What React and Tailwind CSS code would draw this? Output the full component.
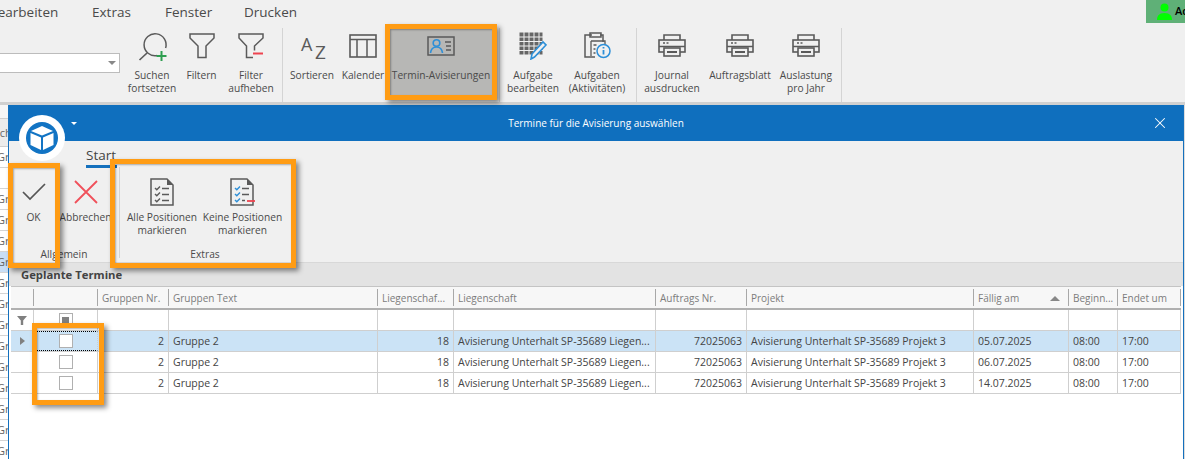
import React from "react";
import { X } from "lucide-react";

const rowsBehind = [
  "Gruppe 2", "", "Gruppe 2", "Gruppe 2", "Gruppe 2", "Gruppe 2", "Gruppe 2", "Gruppe 2", "Gruppe 2",
  "Gruppe 2", "Gruppe 2", "Gruppe 2", "Gruppe 2", "Gruppe 2", "Gruppe 2",
];

const columns = [
  { label: "", w: "w-[23px]" },
  { label: "", w: "w-[64px]" },
  { label: "Gruppen Nr.", w: "w-[71px]", right: true, key: "nr" },
  { label: "Gruppen Text", w: "w-[209px]", key: "text" },
  { label: "Liegenschaf...", w: "w-[76px]", right: true, key: "lnr" },
  { label: "Liegenschaft", w: "w-[202px]", key: "lieg" },
  { label: "Auftrags Nr.", w: "w-[91px]", right: true, key: "auftrag" },
  { label: "Projekt", w: "w-[227px]", key: "projekt" },
  { label: "Fällig am", w: "w-[95px]", key: "datum", sort: true },
  { label: "Beginn...", w: "w-[49px]", key: "start" },
  { label: "Endet um", w: "w-[63px]", key: "ende" },
];

const termine = ["05.07.2025", "06.07.2025", "14.07.2025"].map((datum) => ({
  nr: "2",
  text: "Gruppe 2",
  lnr: "18",
  lieg: "Avisierung Unterhalt SP-35689 Liegen...",
  auftrag: "72025063",
  projekt: "Avisierung Unterhalt SP-35689 Projekt 3",
  datum,
  start: "08:00",
  ende: "17:00",
}));

function SearchPlus() {
  return (
    <svg width="32" height="32" viewBox="0 0 32 32" fill="none">
      <path d="M21 25.6A11 11 0 1 1 29.6 18" stroke="#5a5a5a" strokeWidth="1.5" />
      <path d="M3.5 30 11 23" stroke="#5a5a5a" strokeWidth="1.7" />
      <path d="M25.5 21v10M20.5 26h10" stroke="#2e9e50" strokeWidth="2" />
    </svg>
  );
}

function Funnel({ minus }) {
  return (
    <svg width="26" height="26" viewBox="0 0 26 26" fill="none">
      {minus ? (
        <>
          <path d="M16.500 17.500V13L25 5V1H1V5L8.500 13V24.500H15" stroke="#5a5a5a" strokeWidth="1.5" />
          <path d="M15 20.500H25" stroke="#ee4450" strokeWidth="2" />
        </>
      ) : (
        <path d="M1 1H25V5L17 13V24.500H9V13L1 5Z" stroke="#5a5a5a" strokeWidth="1.5" />
      )}
    </svg>
  );
}

function SortAz() {
  return (
    <svg width="28" height="26" viewBox="0 0 28 26">
      <text x="3" y="17.500" fontSize="18" fontFamily="Open Sans" fill="#5a5a5a">A</text>
      <text x="17" y="25.500" fontSize="19" fontFamily="Open Sans" fill="#5a5a5a">Z</text>
    </svg>
  );
}

function CalendarGrid() {
  return (
    <svg width="28" height="24" viewBox="0 0 28 24" fill="none" stroke="#5a5a5a">
      <rect x="1" y="1" width="26" height="22" strokeWidth="1.6" />
      <path d="M1 5.500H27" strokeWidth="1.5" />
      <path d="M8 5.500V23M18 5.500V23" strokeWidth="1.5" />
    </svg>
  );
}

function ContactCard() {
  return (
    <svg width="28" height="20" viewBox="0 0 28 20" fill="none">
      <rect x="1" y="1" width="26" height="18" stroke="#5a5a5a" strokeWidth="1.5" />
      <circle cx="9.500" cy="7" r="3.300" stroke="#2d8fd8" strokeWidth="1.6" />
      <path d="M3.500 17c.5-4 2.500-6 6-6s5.500 2 6 6" stroke="#2d8fd8" strokeWidth="1.6" />
      <path d="M18 6h6M19 10h5M19 14h5" stroke="#5a5a5a" strokeWidth="1.5" />
    </svg>
  );
}

function GridPencil() {
  return (
    <svg width="28" height="28" viewBox="0 0 28 28" fill="none">
      <rect x="0.500" y="0.500" width="23" height="22" fill="#666" />
      <path d="M0 5h24M0 9.500h24M0 14h24M0 18.500h24M5 0v23M10 0v23M15 0v23M20 0v23" stroke="#f0f0f0" strokeWidth="1" />
      <path d="M13 22 24 10l3 3-11.500 12L12 27Z" fill="#f0f0f0" stroke="#2d8fd8" strokeWidth="1.600" />
    </svg>
  );
}

function ClipboardInfo() {
  return (
    <svg width="28" height="27" viewBox="0 0 28 27" fill="none">
      <path d="M9 3H2v22h10" stroke="#5a5a5a" strokeWidth="1.500" />
      <path d="M17 3h3v7" stroke="#5a5a5a" strokeWidth="1.500" />
      <rect x="7" y="1" width="11" height="4" stroke="#5a5a5a" strokeWidth="1.500" />
      <path d="M8 9h14v4M8 9v15" stroke="#5a5a5a" strokeWidth="1.300" />
      <path d="M10.500 13h3M10.500 17h2M10.500 21h2" stroke="#5a5a5a" strokeWidth="1.300" />
      <circle cx="20.500" cy="19" r="6.500" fill="#f0f0f0" stroke="#2d8fd8" strokeWidth="1.500" />
      <path d="M20.500 18v4.500M20.500 15v1.500" stroke="#2d8fd8" strokeWidth="1.800" />
    </svg>
  );
}

function Printer() {
  return (
    <svg width="28" height="23" viewBox="0 0 28 23" fill="none" stroke="#5a5a5a">
      <path d="M6 6V1h16v5" strokeWidth="1.600" />
      <rect x="1" y="6" width="26" height="12" strokeWidth="1.600" />
      <path d="M1 12.500h26" strokeWidth="1.500" />
      <rect x="6" y="14" width="16" height="8" fill="#f0f0f0" strokeWidth="1.600" />
      <path d="M9 18h10" strokeWidth="2" />
      <path d="M5 9h2M8.500 9h2" strokeWidth="1.300" />
    </svg>
  );
}

function CheckList({ color, minus }) {
  return (
    <svg width="25" height="28" viewBox="0 0 25 28" fill="none">
      <path d="M1 1H17L23 7V27H1Z" stroke="#5a5a5a" strokeWidth="1.500" />
      <path d="M17 1V7H23Z" fill="#5a5a5a" />
      <path d="M5 10l1.800 1.800L10 8.500M5 16l1.800 1.800L10 14.500M5 22l1.800 1.800L10 20.500" stroke={color} strokeWidth="1.400" />
      <path d="M12 10.500h7M12 16.500h7" stroke="#5a5a5a" strokeWidth="1.500" />
      <path d={minus ? "M12 22.500h3" : "M12 22.500h7"} stroke="#5a5a5a" strokeWidth="1.500" />
      {minus && <path d="M17 23h8" stroke="#ee4450" strokeWidth="1.800" />}
    </svg>
  );
}

function Cube() {
  return (
    <svg width="24" height="26" viewBox="0 0 24 26" fill="#fff">
      <path d="M12 1 23 6 12 10.500 1 6Z" />
      <path d="M.5 8 11 12.500V25L.5 20Z" />
      <path d="M23.500 8 13 12.500V25l10.500-5Z" />
    </svg>
  );
}

function RibbonButton({ w, icon, lines, height = "h-[35px]", gap = "mt-[6px]" }) {
  return (
    <div className={`${w} flex shrink-0 flex-col items-center`}>
      <div className={`${height} flex items-center justify-center`}>{icon}</div>
      <div className={`${gap} text-center text-[10.200px] leading-[13px] text-[#4a4a4a] whitespace-nowrap`}>
        {lines.map((l) => (
          <div key={l}>{l}</div>
        ))}
      </div>
    </div>
  );
}

function Sep({ className = "" }) {
  return <div className={`w-px self-stretch bg-[#d4d4d4] ${className}`} />;
}

function Highlight({ className }) {
  return (
    <div
      className={`pointer-events-none absolute border-[5px] border-[#ff9c14] shadow-[3px_3px_5px_rgba(0,0,0,0.45),inset_1px_1px_2px_rgba(0,0,0,0.3)] ${className}`}
    />
  );
}

function CheckBox({ mixed }) {
  return (
    <div className="flex h-[14px] w-[14px] items-center justify-center border border-[#b0b0b0] bg-white">
      {mixed && <div className="h-[7px] w-[7px] bg-[#808080]" />}
    </div>
  );
}

export default function App() {
  return (
    <div className="relative h-[459px] w-[1185px] overflow-hidden bg-[#f0f0f0] font-['Open_Sans',sans-serif] text-[#4a4a4a]">
      {/* Hauptfenster */}
      <div className="h-[105px] border-b-[3px] border-[#d0d0d0]">
        <div className="flex h-[28px]">
          <div className="flex pl-[1px] text-[13.500px] leading-[25px] text-[#4a4a4a]">
            <span className="-ml-[12px] w-[103px]">Bearbeiten</span>
            <span className="w-[73px]">Extras</span>
            <span className="w-[79px]">Fenster</span>
            <span>Drucken</span>
          </div>
          <div className="ml-auto flex h-[23px] w-[39px] items-center gap-[3px] overflow-hidden bg-[#5fb077] pl-[11px]">
            <svg width="15" height="17" viewBox="0 0 15 17" fill="#00ff00" className="shrink-0">
              <circle cx="7.500" cy="4.500" r="4" />
              <path d="M0 17c0-4 2-7 7.500-7S15 13 15 17Z" />
            </svg>
            <span className="text-[11px] font-semibold text-black">Admin</span>
          </div>
        </div>
        <div className="flex h-[74px]">
          <div className="w-[127px] pt-[25px]">
            <div className="relative h-[20px] w-[120px] border border-[#bcbcbc] border-l-0 bg-white">
              <div className="absolute right-[3px] top-[7px] h-0 w-0 border-x-[4px] border-t-[4px] border-x-transparent border-t-[#888]" />
            </div>
          </div>
          <RibbonButton w="w-[50px]" icon={<SearchPlus />} lines={["Suchen", "fortsetzen"]} />
          <RibbonButton w="w-[49px]" icon={<Funnel />} lines={["Filtern"]} />
          <RibbonButton w="w-[50px]" icon={<Funnel minus />} lines={["Filter", "aufheben"]} />
          <Sep className="ml-[6px] mr-[2px]" />
          <RibbonButton w="w-[54px]" icon={<SortAz />} lines={["Sortieren"]} />
          <RibbonButton w="w-[48px]" icon={<CalendarGrid />} lines={["Kalender"]} />
          <div className="mb-[4px] w-[108px] shrink-0 bg-[#b7b7b5]">
            <RibbonButton w="w-full" icon={<ContactCard />} lines={["Termin-Avisierungen"]} />
          </div>
          <Sep className="ml-[4px] mr-[5px]" />
          <RibbonButton w="w-[56px]" icon={<GridPencil />} lines={["Aufgabe", "bearbeiten"]} />
          <RibbonButton w="w-[72px]" icon={<ClipboardInfo />} lines={["Aufgaben", "(Aktivitäten)"]} />
          <Sep className="ml-[3px] mr-[3px]" />
          <RibbonButton w="w-[64px]" icon={<Printer />} lines={["Journal", "ausdrucken"]} />
          <RibbonButton w="w-[72px]" icon={<Printer />} lines={["Auftragsblatt"]} />
          <RibbonButton w="w-[60px]" icon={<Printer />} lines={["Auslastung", "pro Jahr"]} />
          <Sep className="ml-[5px]" />
        </div>
      </div>

      <div className="flex h-[354px]">
        {/* Liste hinter dem Dialog */}
        <div className="w-[8px] shrink-0 overflow-hidden bg-[#f6f6f6] pt-[13px] text-[11px] leading-[20px] text-[#666]">
          <div className="h-[29px] border-y border-[#cfcfcf] bg-[#ececec] leading-[27px] whitespace-nowrap">
            <span className="-ml-[13px]">Such</span>
          </div>
          {rowsBehind.map((r, i) => (
            <div
              key={i}
              className={`-ml-[3px] h-[21px] whitespace-nowrap border-b border-[#d4d4d4] ${i === 5 ? "bg-[#c9def5]" : "bg-white"}`}
            >
              {r}
            </div>
          ))}
        </div>

        {/* Dialog */}
        <div className="relative flex w-[1176px] shrink-0 flex-col border-x border-[#1470bd] bg-[#f0f0f0]">
          <div className="relative flex h-[36px] shrink-0 items-center justify-center bg-[#0f6fbe] text-[10px] text-white">
            <div className="absolute left-[62px] top-[17px] h-0 w-0 border-x-[3px] border-t-[3px] border-x-transparent border-t-white" />
            <span>Termine für die Avisierung auswählen</span>
            <X className="absolute right-[14px] top-[9px]" size={18} strokeWidth={1.4} />
          </div>
          <div className="absolute left-[10px] top-[10px] flex h-[46px] w-[46px] items-center justify-center rounded-full bg-white">
            <div className="flex h-[32px] w-[32px] items-center justify-center rounded-full bg-[#1274c4]">
              <Cube />
            </div>
          </div>

          <div className="h-[26px] shrink-0 pl-[77px] pt-[5px]">
            <div className="w-[31px] border-b-[3px] border-[#1470bd] text-[13.500px] leading-[19px] text-[#444]">Start</div>
          </div>

          <div className="flex h-[96px] shrink-0 border-b border-[#d8d8d8]">
            <div className="flex w-[110px] flex-col">
              <div className="flex flex-1 pl-[2px] pt-[8px]">
                <RibbonButton
                  w="w-[45px]"
                  height="h-[33px]"
                  gap="mt-[3px]"
                  icon={
                    <svg width="24" height="18" viewBox="0 0 24 18" fill="none">
                      <path d="M1 9l7 7L23 1" stroke="#555" strokeWidth="1.700" />
                    </svg>
                  }
                  lines={["OK"]}
                />
                <RibbonButton
                  w="w-[59px]"
                  height="h-[33px]"
                  gap="mt-[3px]"
                  icon={
                    <svg width="24" height="24" viewBox="0 0 24 24" fill="none">
                      <path d="M1 1l22 22M23 1 1 23" stroke="#f0505a" strokeWidth="1.800" />
                    </svg>
                  }
                  lines={["Abbrechen"]}
                />
              </div>
              <div className="h-[18px] pt-[2px] text-center text-[10.200px] leading-[17px]">Allgemein</div>
            </div>
            <Sep className="mb-[4px] bg-[#cfcfcf]" />
            <div className="flex w-[180px] flex-col">
              <div className="flex flex-1 pl-[2px] pt-[8px]">
                <RibbonButton w="w-[80px]" height="h-[33px]" gap="mt-[3px]" icon={<CheckList color="#5a5a5a" />} lines={["Alle Positionen", "markieren"]} />
                <RibbonButton w="w-[81px]" height="h-[33px]" gap="mt-[3px]" icon={<CheckList color="#2d8fd8" minus />} lines={["Keine Positionen", "markieren"]} />
              </div>
              <div className="h-[18px] pt-[2px] pr-[10px] text-center text-[10.200px] leading-[17px]">Extras</div>
            </div>
          </div>

          <div className="h-[23px] shrink-0 bg-[#e3e3e3] pl-[12px] text-[11.300px] font-bold leading-[23px] text-[#444]">
            Geplante Termine
          </div>

          {/* Tabelle */}
          <div className="flex-1 bg-white pl-[2px] text-[10.500px] text-[#444]">
            <div className="flex h-[24px] w-[1170px] border-y border-b-2 border-t-[#c4c4c4] border-b-[#b0b0b0] bg-[#f7f7f7] text-[10px] text-[#7c7c7c]">
              {columns.map((c, i) => (
                <div key={i} className={`${c.w} flex shrink-0 items-center py-[2px]`}>
                  <div className="flex h-full min-w-0 flex-1 items-center justify-between pl-[4px] pr-[8px] pt-[1px] whitespace-nowrap">
                    <span>{c.label}</span>
                    {c.sort && (
                      <div className="h-0 w-0 border-x-[5px] border-b-[5px] border-x-transparent border-b-[#888]" />
                    )}
                  </div>
                  <div className="h-full w-px shrink-0 bg-[#a8a8a8]" />
                </div>
              ))}
            </div>

            <div className="flex h-[21px] w-[1170px] border-b border-[#cfcfcf]">
              {columns.map((c, i) => (
                <div key={i} className={`${c.w} flex shrink-0 items-center justify-center border-r border-[#cfcfcf]`}>
                  {i === 0 && (
                    <svg width="10" height="9" viewBox="0 0 10 9" fill="#808080">
                      <path d="M0 0h10L6.200 4.500V9H3.800V4.500Z" />
                    </svg>
                  )}
                  {i === 1 && <CheckBox mixed />}
                </div>
              ))}
            </div>

            {termine.map((t, r) => (
              <div
                key={t.datum}
                className={`flex h-[21px] w-[1170px] border-b border-[#cfcfcf] ${r === 0 ? "bg-[#cbe3f6]" : "bg-white"}`}
              >
                {columns.map((c, i) => (
                  <div
                    key={i}
                    className={`${c.w} flex shrink-0 items-center overflow-hidden whitespace-nowrap border-r border-[#cfcfcf] px-[4px] ${c.right ? "justify-end" : ""} ${i < 2 ? "justify-center" : "pt-[2px]"} ${i === 1 && r === 0 ? "border-y border-dotted border-y-black" : ""}`}
                  >
                    {i === 0 && r === 0 && (
                      <div className="h-0 w-0 border-y-[4px] border-l-[5px] border-y-transparent border-l-[#808080]" />
                    )}
                    {i === 1 && <CheckBox />}
                    {c.key && t[c.key]}
                  </div>
                ))}
              </div>
            ))}
          </div>
        </div>

        <div className="w-px bg-[#dcdcdc]" />
      </div>

      {/* Markierungen */}
      <Highlight className="left-[385px] top-[24px] h-[76px] w-[112px]" />
      <Highlight className="left-[8px] top-[163px] h-[105px] w-[52px]" />
      <Highlight className="left-[110px] top-[159px] h-[109px] w-[186px]" />
      <Highlight className="left-[32px] top-[323px] h-[82px] w-[72px]" />
    </div>
  );
}
